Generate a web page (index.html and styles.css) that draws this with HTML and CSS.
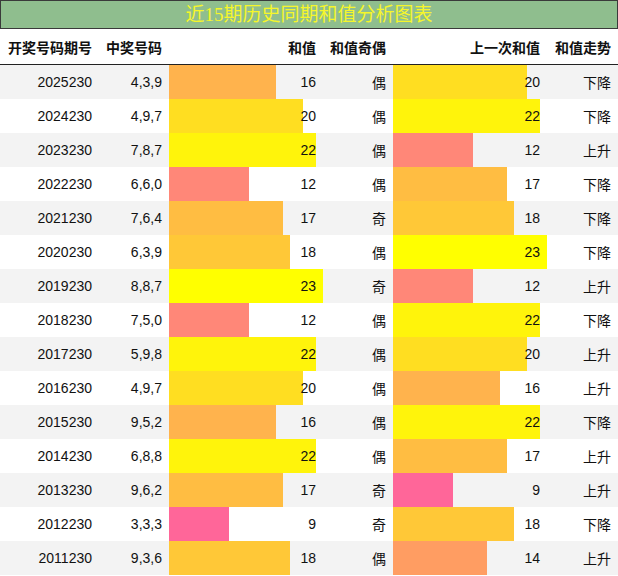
FILE: index.html
```html
<!DOCTYPE html>
<html>
<head>
<meta charset="utf-8">
<link rel="stylesheet" href="styles.css">
</head>
<body>
<div class="chart">
  <div class="title"><span class="title-text">近15期历史同期和值分析图表</span></div>
  <div class="grid">
    <div class="row head">
      <div class="cell">开奖号码期号</div>
      <div class="cell">中奖号码</div>
      <div class="cell">和值</div>
      <div class="cell">和值奇偶</div>
      <div class="cell">上一次和值</div>
      <div class="cell">和值走势</div>
    </div>
    <div id="body"></div>
  </div>
</div>
<script src="script.js"></script>
</body>
</html>
```
FILE: styles.css
```css
html, body { margin: 0; padding: 0; background: #fff; }
.chart { width: 618px; font-family: "Liberation Sans", "Noto Sans CJK SC", sans-serif; color: #111; }
.title {
  height: 27px;
  border: 1px solid #3a3a3a;
  background: #8fbe8e;
  display: flex;
  align-items: center;
  justify-content: center;
}
.title-text {
  font-family: "Liberation Serif", "Noto Sans CJK SC", serif;
  font-size: 19px;
  color: #f6f62a;
  line-height: 27px;
}
.row {
  display: grid;
  grid-template-columns: 99px 70px 154px 70px 154px 71px;
  height: 34px;
}
.row.head {
  height: 35px;
  border-bottom: 1px solid #222;
  font-weight: bold;
}
.row.alt { background: #f3f3f3; }
.cell {
  position: relative;
  display: flex;
  align-items: center;
  justify-content: flex-end;
  padding-right: 7px;
  font-size: 14px;
  white-space: nowrap;
}
.bar {
  position: absolute;
  left: 0; top: 0; bottom: 0;
}
.val { position: relative; }
```
FILE: script.js
```js
var data = [
  ["2025230","4,3,9",16,"偶",20,"下降"],
  ["2024230","4,9,7",20,"偶",22,"下降"],
  ["2023230","7,8,7",22,"偶",12,"上升"],
  ["2022230","6,6,0",12,"偶",17,"下降"],
  ["2021230","7,6,4",17,"奇",18,"下降"],
  ["2020230","6,3,9",18,"偶",23,"下降"],
  ["2019230","8,8,7",23,"奇",12,"上升"],
  ["2018230","7,5,0",12,"偶",22,"下降"],
  ["2017230","5,9,8",22,"偶",20,"上升"],
  ["2016230","4,9,7",20,"偶",16,"上升"],
  ["2015230","9,5,2",16,"偶",22,"下降"],
  ["2014230","6,8,8",22,"偶",17,"上升"],
  ["2013230","9,6,2",17,"奇",9,"上升"],
  ["2012230","3,3,3",9,"奇",18,"下降"],
  ["2011230","9,3,6",18,"偶",14,"上升"]
];
function color(v){
  var t = (v - 9) / 14;
  var g = Math.round(102 + 153 * t);
  var b = Math.round(153 - 153 * t);
  return "rgb(255," + g + "," + b + ")";
}
function barCell(v){
  var w = Math.round(v / 23 * 154);
  return '<div class="cell"><span class="bar" style="width:' + w + 'px;background:' + color(v) + '"></span><span class="val">' + v + '</span></div>';
}
var html = "";
data.forEach(function(d, i){
  html += '<div class="row' + (i % 2 === 0 ? ' alt' : '') + '">' +
    '<div class="cell">' + d[0] + '</div>' +
    '<div class="cell">' + d[1] + '</div>' +
    barCell(d[2]) +
    '<div class="cell">' + d[3] + '</div>' +
    barCell(d[4]) +
    '<div class="cell">' + d[5] + '</div>' +
    '</div>';
});
document.getElementById("body").innerHTML = html;
```
